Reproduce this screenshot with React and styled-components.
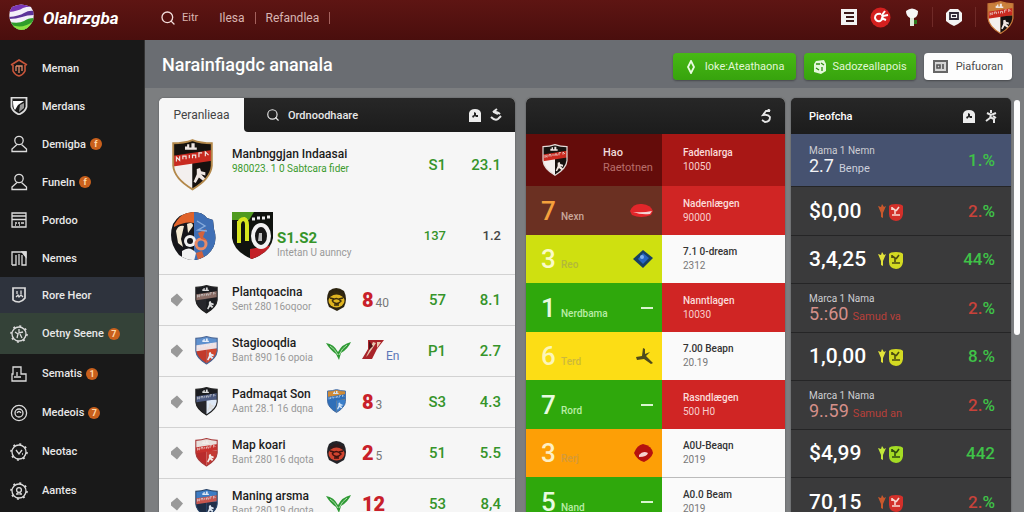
import React from "react";
import styled, { createGlobalStyle, css } from "styled-components";
import { Search } from "lucide-react";

const GlobalStyle = createGlobalStyle`
  * {
    box-sizing: border-box;
  }
  body {
    margin: 0;
    background: #7c7e80;
    font-family: Roboto, "Liberation Sans", sans-serif;
    font-size: 12px;
    color: #fff;
  }
  button, input {
    font-family: inherit;
  }
  svg {
    display: block;
    flex-shrink: 0;
  }
`;

const Page = styled.div`
  height: 100vh;
  display: flex;
  flex-direction: column;
`;

const TopBar = styled.header`
  height: 40px;
  flex-shrink: 0;
  display: flex;
  align-items: center;
  padding: 0 0 5px 9px;
  background: linear-gradient(#5e1513, #4a0e0d);
`;

const Brand = styled.a`
  width: 151px;
  display: flex;
  align-items: center;
  gap: 9px;
  color: #fff;
  font-size: 17px;
  font-weight: 700;
  font-style: italic;
  text-decoration: none;
`;

const TopNav = styled.nav`
  display: flex;
  align-items: center;
  color: #d9b5b2;
`;

const TopLink = styled.a`
  color: #d9b5b2;
  font-size: ${props => (props.$first ? 11 : 12)}px;
  line-height: 12px;
  text-decoration: none;
  padding-left: ${props => (props.$first ? 6 : 10)}px;
  padding-right: 10px;
  border-right: 1px solid ${props => (props.$first ? "transparent" : "#a5625e")};
`;

const TopTools = styled.div`
  margin-left: auto;
  display: flex;
  align-items: center;
`;

const ToolButton = styled.button`
  border: 0;
  padding: 0;
  background: none;
  width: ${props => props.$width}px;
  display: flex;
  justify-content: center;
  cursor: pointer;
`;

const ToolDivider = styled.span`
  width: 1px;
  height: 20px;
  background: #6f2a27;
`;

const Body = styled.div`
  flex: 1;
  min-height: 0;
  display: flex;
`;

const Sidebar = styled.nav`
  width: 145px;
  flex-shrink: 0;
  padding-top: 9px;
  background: #191919;
  border-right: 1px solid #333;
  overflow: hidden;
`;

const SideLink = styled.a`
  display: flex;
  align-items: center;
  height: ${props => props.$height}px;
  padding-left: 10px;
  color: #e8e8e8;
  font-size: 11px;
  font-weight: 500;
  text-decoration: none;
  background: ${props => props.$background || "transparent"};

  svg {
    margin-right: 14px;
  }
`;

const SideBadge = styled.span`
  width: 12px;
  height: 12px;
  margin-left: 4px;
  border-radius: 50%;
  background: #c9601c;
  color: #ffd9a8;
  font-size: 9px;
  line-height: 12px;
  font-weight: 700;
  text-align: center;
`;

const Content = styled.main`
  flex: 1;
  min-width: 0;
  overflow-y: auto;
  scrollbar-width: none;
`;

const TitleBar = styled.div`
  display: flex;
  align-items: center;
  gap: 8px;
  height: 48px;
  padding: 5px 12px 0 17px;
  background: #6a6d72;
`;

const Title = styled.h1`
  margin: 0 auto 4px 0;
  font-size: 18px;
  line-height: 24px;
  font-weight: 500;
`;

const ActionButton = styled.button`
  display: flex;
  align-items: center;
  gap: ${props => props.$gap || 6}px;
  height: 27px;
  padding: 0 ${props => props.$pad || 9}px;
  border: 0;
  border-radius: 4px;
  font-size: 11px;
  white-space: nowrap;
  color: ${props => (props.$plain ? "#4a4a4a" : "#e2f7d6")};
  background: ${props =>
    props.$plain ? "#fdfdfd" : "linear-gradient(#47b915, #37a30d)"};
  box-shadow: 0 1px 2px rgba(0, 0, 0, 0.35);
  cursor: pointer;
`;

const Panels = styled.div`
  display: flex;
  align-items: flex-start;
  gap: 3px;
  padding: 10px 4px 0 14px;
`;

const Columns = styled.div`
  flex: 1;
  display: grid;
  grid-template-columns: 361fr 259fr 220fr;
  gap: 6px;
`;

const ScrollThumb = styled.div`
  width: 6px;
  height: 235px;
  margin-top: 2px;
  border-radius: 3px;
  background: #fcfcfc;
`;

const Card = styled.section`
  min-width: 0;
  overflow: hidden;
  border-radius: 5px 5px 0 0;
  background: ${props => props.$background || "#f6f6f6"};
  margin-right: ${props => (props.$wide ? 5 : 0)}px;
  box-shadow: 0 0 2px rgba(0, 0, 0, 0.35);
`;

const CardHead = styled.div`
  display: flex;
  align-items: center;
  height: ${props => props.$height || 36}px;
  padding: 0 13px 0 18px;
  gap: 8px;
  background: linear-gradient(#272727, #1c1c1c);
`;

const CardTitle = styled.h2`
  margin: 0;
  font-size: 11px;
  font-weight: 500;
`;

const Spacer = styled.span`
  flex: 1;
`;

const TabRow = styled.div`
  display: flex;
`;

const Tab = styled.button`
  width: 85px;
  border: 0;
  padding: 0;
  background: #f6f6f6;
  color: #444;
  font-size: 12px;
`;

const TabTools = styled(CardHead)`
  flex: 1;
  min-width: 0;
  padding-left: 22px;
  border-bottom-left-radius: 4px;
`;

const SearchInput = styled.input`
  width: 100px;
  border: 0;
  padding: 0;
  background: none;
  color: #fff;
  font-size: 11px;
  font-weight: 500;
  outline: none;

  &::placeholder {
    color: #e8e8e8;
  }
`;

const HeadButton = styled.button`
  border: 0;
  padding: 0;
  background: none;
  color: #e6e6e6;
  cursor: pointer;
`;

const Table = styled.table`
  width: 100%;
  table-layout: fixed;
  border-collapse: collapse;

  td {
    padding: 0;
  }
`;

const TeamRow = styled.tr`
  height: ${props => props.$height || 51}px;

  ${props =>
    props.$lined &&
    css`
      border-top: 1px solid #d2d2d2;
    `}
`;

const MarkCell = styled.td`
  && {
    padding-left: 11px;
  }
`;

const Inline = styled.div`
  display: flex;
  align-items: ${props => props.$align || "center"};
  gap: ${props => props.$gap || 0}px;
`;

const TeamName = styled.div`
  font-size: 12px;
  line-height: 15px;
  font-weight: 500;
  color: #1c1c1c;
  white-space: nowrap;
`;

const TeamNote = styled.div`
  font-size: 10px;
  line-height: 14px;
  color: ${props => (props.$green ? "#3b9a2d" : "#999")};
  padding-bottom: ${props => (props.$green ? 8 : 0)}px;
  white-space: nowrap;
`;

const Odds = styled.div`
  font-size: 15px;
  line-height: 16px;
  font-weight: 700;
  color: #35942a;
`;

const Score = styled.span`
  font-size: 20px;
  line-height: 24px;
  font-weight: 900;
  color: #c8202a;
`;

const ScoreNote = styled.span`
  font-size: 12px;
  color: ${props => props.$color || "#777"};
`;

const ValueCell = styled.td`
  text-align: right;
  font-size: ${props => (props.$small ? 13 : 15)}px;
  font-weight: 500;
  color: ${props => (props.$dark ? "#444" : "#35942a")};

  &&:last-child {
    padding-right: 14px;
  }
`;

const GroupRow = styled.tr`
  height: ${props => props.$height}px;
`;

const GroupCell = styled.td`
  background: ${props => props.$background};

  && {
    padding: 0 9px 0 15px;
  }
`;

const GroupInner = styled.div`
  display: flex;
  align-items: center;
  justify-content: space-between;
`;

const GroupNumber = styled.span`
  width: 20px;
  font-size: 26px;
  line-height: 30px;
  font-weight: 500;
  color: ${props => props.$color};
`;

const GroupLabel = styled.span`
  font-size: 10px;
  line-height: 14px;
  font-weight: 500;
  color: ${props => props.$color};
`;

const GroupHead = styled.div`
  width: 50px;
  font-size: 11px;
  line-height: 15px;
  font-weight: 500;
  color: #f0dada;
  white-space: nowrap;
`;

const GroupSub = styled.div`
  font-weight: 400;
  color: #b86f6b;
`;

const Dash = styled.span`
  width: 12px;
  height: 2px;
  background: #d9f5cf;
`;

const SideCell = styled.td`
  background: ${props => props.$background};
  color: ${props => (props.$light ? "#777" : "#f7cfcd")};
  font-size: 10px;
  line-height: 14px;
  box-shadow: ${props => (props.$lined ? "inset 0 1px #bbb" : "none")};

  && {
    padding-left: 21px;
  }
  strong {
    display: block;
    font-weight: 500;
    color: ${props => (props.$light ? "#333" : "#fbdcda")};
  }
`;

const PriceRow = styled.tr`
  height: ${props => props.$height}px;
  background: ${props => (props.$selected ? "#465270" : "#3a3a3b")};
  border-bottom: 1px solid #252526;

  td:first-child {
    padding-left: 18px;
  }
  td:last-child {
    padding-right: 16px;
    text-align: right;
  }
`;

const Price = styled.span`
  width: 54px;
  font-size: 21px;
  line-height: 24px;
  font-weight: 500;
  white-space: nowrap;
`;

const SmallTitle = styled.div`
  font-size: 10px;
  line-height: 12px;
  color: #cdcdd2;
`;

const SmallPrice = styled.span`
  font-size: 18px;
  line-height: 18px;
  color: ${props => props.$color};
`;

const SmallUnit = styled.span`
  font-size: 11px;
  color: ${props => props.$color};
`;

const Percent = styled.span`
  font-size: 17px;
  font-weight: 500;
  color: ${props => (props.$down ? "#c8423a" : "#3fc248")};
`;

const SHIELD = "M2 3 Q12 3 20 0 Q28 3 38 3 V24 Q37 36 20 46 Q3 36 2 24 Z";

function Crest({ width, border, top, left, right, band, mark, id }) {
  return (
    <svg width={width} viewBox="-1 -1 42 49" aria-hidden="true">
      <clipPath id={id}>
        <path d={SHIELD} />
      </clipPath>
      <g clipPath={`url(#${id})`}>
        <rect width="40" height="48" fill={top} />
        <rect y="20" width="20" height="28" fill={left} />
        <rect x="20" y="20" width="20" height="28" fill={right} />
        <path d="M0 15 L40 9 V19 L0 25 Z" fill={band} />
        <path
          d="M5 20 v-4 l3 3 v-4 M11 18 v-3 h3 v3 M17 17 v-3 M20 17 v-3 h3 v3 M26 16 v-4 h3 M32 15 v-4 l3 3"
          stroke={mark}
          strokeWidth="1.1"
          fill="none"
        />
        <path d="M13 9 v-3 h2 v-2 h2 v3 h2 v-4 h3 v4 h2 v2 z" fill={mark} />
        <path
          d="M24 27 l3 -1 1 3 4 1 v3 l-4 -1 5 5 -2 2 -5 -4 -3 5 -2 -1 3 -7 z"
          fill={mark}
        />
      </g>
      <path d={SHIELD} fill="none" stroke={border} strokeWidth="1.8" />
    </svg>
  );
}

function Logo() {
  return (
    <svg width="25" height="27" viewBox="0 0 25 27" aria-hidden="true">
      <clipPath id="logo">
        <path d="M3 3 Q12 -2 22 3 Q26 8 24 17 Q19 26 12 26 Q4 25 1 16 Q-1 8 3 3Z" />
      </clipPath>
      <g clipPath="url(#logo)">
        <rect width="25" height="27" fill="#f3eef8" />
        <path d="M0 8 Q9 7 14 4 Q19 2 25 3 V0 H0Z" fill="#7a35b5" />
        <path d="M0 13 Q10 12 15 9 Q20 6 25 7 V11 Q18 11 13 13 Q7 15 0 15Z" fill="#5d3399" />
        <path d="M0 18 Q10 20 15 17 Q19 14 25 14 V27 H0Z" fill="#2f9d2b" />
        <path d="M2 21 Q14 25 23 18 L18 27 H6Z" fill="#8be044" />
      </g>
    </svg>
  );
}

function Line({ children, color = "#dcdcdc" }) {
  return (
    <svg
      width="18"
      height="18"
      viewBox="0 0 18 18"
      fill="none"
      stroke={color}
      strokeWidth="1.3"
      aria-hidden="true"
    >
      {children}
    </svg>
  );
}

const gear = (
  <>
    <circle cx="9" cy="9" r="7" />
    <circle cx="9" cy="9" r="8" strokeWidth="1.6" strokeDasharray="2 4.28" />
  </>
);

const user = (
  <>
    <circle cx="9" cy="5.5" r="4.2" />
    <path d="M7 9.5 L2 14 V16.5 H16.5 V14 L11.5 9.5" />
  </>
);

const SIDE_ICONS = {
  home: (
    <Line color="#c8553a">
      <path d="M1 6 L9 1 L17 6 M3 6 V12 Q5 16 9 17 Q13 16 15 12 V6" strokeWidth="1.6" />
      <path d="M6 7 H12 V12 M9 7 V14 M6 7 V12" stroke="#e08a6a" />
    </Line>
  ),
  shield: (
    <Line>
      <path d="M1.5 0.5 H16.5 V10 Q15 15 9 17.5 Q3 15 1.5 10 Z" strokeWidth="1.8" />
      <path d="M3 4 H14 L8 8 L5 13 Q3 11 3 4 Z" fill="#fff" stroke="none" />
      <path d="M10 8 L14 6 V11 L9 15 Z" fill="#999" stroke="none" />
    </Line>
  ),
  user: <Line>{user}</Line>,
  table: (
    <Line>
      <path d="M2 2 H16 V16 H2 Z M2 5 H16 M2 8.5 H16" />
      <path d="M5 12 h2 M8 12 h2 M11 12 h3 M5 14 h1 M9 14 h1" />
    </Line>
  ),
  columns: (
    <Line>
      <path d="M2 16 V3 H16 V16 H12 V6 M2 16 H6 V6 M9 5 V16" />
      <path d="M12 3 h4 v5 z" fill="#dcdcdc" />
    </Line>
  ),
  badge: (
    <Line>
      <path d="M3 2 H15 V12 Q13 15 9 16 Q5 16 3 14 Z" strokeWidth="1.7" />
      <path d="M6 11 L8 9 L9 11 L11 9 L13 11 M7 5 V8 M11 4.5 V8" />
    </Line>
  ),
  gearA: (
    <Line>
      {gear}
      <path d="M5 7 L8 9 L7 13 M9 4 V8 L13 7 M10 9 L12 13" />
    </Line>
  ),
  blocks: (
    <Line>
      <path d="M3 2 H11 V9 H16 V16 H2 V9 H3 Z M7 7 V11 M4 12 H11" />
    </Line>
  ),
  ring: (
    <Line>
      <circle cx="9" cy="9" r="7.6" />
      <circle cx="9" cy="9" r="4" />
      <path d="M7 9 Q9 6 11 9" />
    </Line>
  ),
  gearB: (
    <Line>
      {gear}
      <path d="M6 7 L9 11 L12 7 M12 11 h1" />
    </Line>
  ),
  gearC: (
    <Line>
      {gear}
      <circle cx="9" cy="8" r="2.4" />
      <path d="M6 12 H8 V10 M10 10 V12 H12" />
    </Line>
  )
};

function HouseIcon() {
  return (
    <svg width="14" height="15" viewBox="0 0 14 15" aria-hidden="true">
      <path d="M1 5 Q2 1 7 1 Q12 1 13 5 V14 H1 Z" fill="#ececec" />
      <path d="M6 4 l2 1 v2 h2 v2 h-2 l-1 -1 -2 2 -1 -2 2 -1z" fill="#222" />
    </svg>
  );
}

function SwapIcon() {
  return (
    <svg width="12" height="14" viewBox="0 0 12 14" fill="none" stroke="#e6e6e6" strokeWidth="2" aria-hidden="true">
      <path d="M7 1 L3 4 Q7 3 10 6 M1 9 Q5 13 8 11 L11 8 M4 4 L8 6" />
    </svg>
  );
}

function HookIcon() {
  return (
    <svg width="12" height="15" viewBox="0 0 12 15" fill="none" stroke="#e6e6e6" strokeWidth="1.8" aria-hidden="true">
      <path d="M10 2 H6 L3 6 Q8 5 10 8 Q10 13 5 13 L2 11 M8 0 L10 2" />
    </svg>
  );
}

function RunnerIcon() {
  return (
    <svg width="14" height="15" viewBox="0 0 14 15" fill="none" stroke="#e6e6e6" strokeWidth="2" aria-hidden="true">
      <path d="M7 1 V4 M3 4 L7 6 L12 4 M7 6 L6 9 L2 12 M6 8 L10 10 V14 M9 7 L12 9" />
    </svg>
  );
}

function Diamond() {
  return (
    <svg width="14" height="14" viewBox="0 0 14 14" aria-hidden="true">
      <path d="M7 0.5 L13 6.5 L7 13.5 L1 8.5 V5.5 Z" fill="#999" />
    </svg>
  );
}

function Leaf() {
  return (
    <svg width="25" height="20" viewBox="0 0 25 20" aria-hidden="true">
      <path d="M0 2 Q8 3 12 11 Q16 3 25 1 Q22 8 15 12 L13 19 L10 13 Q4 9 0 2Z" fill="#2f9a35" />
      <path d="M4 5 Q9 8 12 14 M21 4 Q16 7 13 14" stroke="#c9ecc4" strokeWidth="0.8" fill="none" />
    </svg>
  );
}

function Slash() {
  return (
    <svg width="22" height="21" viewBox="0 0 22 21" aria-hidden="true">
      <path d="M6 1 H22 L15 10 L10 20 H0 L6 10 Z" fill="#a9242a" />
      <path d="M11 3 L14 4 L6 16 L4 18 Z M15 3 h4 l-4 6z" fill="#e8c9b0" />
      <path d="M7 2 l4 5 -4 4z" fill="#531317" />
    </svg>
  );
}

function RoundCrest() {
  return (
    <svg width="46" height="50" viewBox="0 0 46 50" aria-hidden="true">
      <clipPath id="round">
        <path d="M23 1 Q33 1 37 7 L43 9 L44 18 Q49 34 37 44 Q23 54 9 44 Q-3 30 3 13 Q9 2 23 1Z" />
      </clipPath>
      <g clipPath="url(#round)">
        <rect width="46" height="50" fill="#16161a" />
        <rect x="24" width="22" height="50" fill="#3f6fb5" />
        <path d="M4 14 Q12 0 24 0 V12 Q15 10 4 16Z" fill="#e0622a" />
        <path d="M6 20 Q8 14 14 15 L11 28 L13 36 L8 32 Z M17 13 Q23 10 23 15 L18 22 Z" fill="#f4ead2" />
        <circle cx="20" cy="30" r="6" fill="#f2f2f2" />
        <circle cx="20" cy="30" r="3" fill="#16161a" />
        <path d="M12 40 Q20 34 26 42 L24 50 H12Z" fill="#f2f2f2" />
        <circle cx="31" cy="33" r="5" fill="none" stroke="#e98a66" strokeWidth="3" />
        <path d="M28 22 L36 18 L33 26 L38 30 L31 28Z M26 42 l6 -2 2 6 -6 3z" fill="#d2623c" />
        <path d="M27 10 l8 5 -7 4 9 1" stroke="#86abdc" strokeWidth="1.4" fill="none" />
      </g>
    </svg>
  );
}

function NoCrest() {
  return (
    <svg width="41" height="49" viewBox="0 0 41 49" aria-hidden="true">
      <clipPath id="nocrest">
        <path d="M0 1 H41 V27 Q39 41 20 48 Q2 41 0 27 Z" />
      </clipPath>
      <g clipPath="url(#nocrest)">
        <rect width="41" height="49" fill="#10130f" />
        <path d="M0 1 H22 L17 9 H0Z" fill="#4f9a1f" />
        <path d="M18 38 L41 34 L30 49 H18Z" fill="#c32127" />
        <path d="M7 32 V10 M7 13 Q8 8 12 8 Q15 9 15 14 V30" stroke="#d6e51e" strokeWidth="4" fill="none" />
        <ellipse cx="29" cy="25" rx="8" ry="11" fill="#171717" stroke="#f2f2f2" strokeWidth="4" />
        <path d="M27 22 h3 v8 h-4 z" fill="#bbb" />
        <path d="M20 8 h3 M25 7 h3 M30 7 h3 M35 6 h3" stroke="#eee" strokeWidth="3" />
      </g>
    </svg>
  );
}

function RoundBadge({ outer, inner, mark }) {
  return (
    <svg width="21" height="25" viewBox="0 0 21 25" aria-hidden="true">
      <path d="M3 4 Q10 -2 18 4 Q22 12 18 20 L11 24 L3 20 Q-1 12 3 4Z" fill={outer} />
      <path d="M4 6 h3 l1 -3 2 2 2 -2 2 3 h3 v3 H4z" fill={mark} opacity="0.5" />
      <ellipse cx="10.5" cy="14" rx="8" ry="6.5" fill={inner} />
      <path d="M6 14 q4 -5 9 0 q-4 5 -9 0 M8 18 h5 M4 11 l4 1 M17 11 l-4 1" stroke={mark} strokeWidth="1.4" fill="none" />
    </svg>
  );
}

function Chip({ color, arrow, ink }) {
  return (
    <svg width="27" height="22" viewBox="0 -2 27 22" aria-hidden="true">
      <path d="M1 4 L4 5 L5 2 L7 5 L9 4 L6 11 V16 L4 15 V11 Z" fill={arrow} />
      <path d="M12 4 Q13 2 19 2 Q25 2 26 4 V12 Q25 19 19 19 Q12 18 12 12Z" fill={color} />
      <path d="M15 6 L18 8 V12 M22 5 L19 9 M15 13 H23 M15 5 V8" stroke={ink} strokeWidth="1.6" fill="none" />
    </svg>
  );
}

const SIDE_ITEMS = [
  { icon: "home", label: "Meman", height: 38 },
  { icon: "shield", label: "Merdans", height: 38 },
  { icon: "user", label: "Demigba", height: 38, badge: "f" },
  { icon: "user", label: "Funeln", height: 38, badge: "f" },
  { icon: "table", label: "Pordoo", height: 38 },
  { icon: "columns", label: "Nemes", height: 38 },
  { icon: "badge", label: "Rore Heor", height: 36, background: "#2e333d" },
  { icon: "gearA", label: "Oetny Seene", height: 41, badge: "7", background: "#344238" },
  { icon: "blocks", label: "Sematis", height: 39, badge: "1" },
  { icon: "ring", label: "Medeois", height: 39, badge: "7" },
  { icon: "gearB", label: "Neotac", height: 39 },
  { icon: "gearC", label: "Aantes", height: 39 }
];

const DARK = { border: "#222", top: "#1b1c20", left: "#26262b", right: "#1b1c20", band: "#8a6d66", mark: "#ddd" };
const RED = { border: "#a73a3a", top: "#e9e1dd", left: "#b92c2c", right: "#c53a34", band: "#c8322e", mark: "#f3ece8" };
const BLUE = { border: "#4a6695", top: "#5f91cf", left: "#c23a2c", right: "#d0472f", band: "#f0dfe0", mark: "#e7eefa" };
const NAVY = { border: "#284468", top: "#3d7cc4", left: "#1d2c45", right: "#22304a", band: "#c6564e", mark: "#dfe8f3" };
const CLUB = { border: "#b3884a", top: "#17130f", left: "#f3efee", right: "#16110f", band: "#c92a20", mark: "#efe6e2" };

const TEAMS = [
  {
    name: "Plantqoacina",
    note: "Sent 280 16oqoor",
    crest: DARK,
    badge: <RoundBadge outer="#2c2410" inner="#e0b520" mark="#3a2c0b" />,
    score: "8",
    scoreNote: "40",
    a: "57",
    b: "8.1"
  },
  {
    name: "Stagiooqdia",
    note: "Bant 890 16 opoia",
    crest: BLUE,
    badge: <Leaf />,
    form: <Slash />,
    scoreNote: "En",
    noteColor: "#5b76b8",
    a: "P1",
    b: "2.7"
  },
  {
    name: "Padmaqat Son",
    note: "Aant 28.1 16 dqna",
    crest: { ...DARK, band: "#4d5a80", right: "#dfe9f7" },
    badge: (
      <Crest id="badge" width={21} border="#3c6aa8" top="#d08a35" left="#2f6fb8" right="#3b7fca" band="#2f6fb8" mark="#cfe2f7" />
    ),
    score: "8",
    scoreNote: "3",
    a: "S3",
    b: "4.3"
  },
  {
    name: "Map koari",
    note: "Bant 280 16 dqota",
    crest: RED,
    badge: <RoundBadge outer="#232328" inner="#d2442f" mark="#40120f" />,
    score: "2",
    scoreNote: "5",
    a: "51",
    b: "5.5"
  },
  {
    name: "Maning arsma",
    note: "Bant 280 19 dqota",
    crest: NAVY,
    badge: <Leaf />,
    score: "12",
    a: "53",
    b: "8,4"
  }
];

const GREEN_GROUP = { color: "#e8fbe0", labelColor: "#b9eda6", background: "#2fa80c", icon: "dash" };

const GROUPS = [
  { n: "7", color: "#f5a03c", label: "Nexn", labelColor: "#c9a79b", background: "#6b3022", icon: "cap", side: "Nadenlægen", sub: "90000" },
  { n: "3", color: "#fbfbc8", label: "Reo", labelColor: "#b3b83a", background: "#cfe010", icon: "gem", side: "7.1 0-dream", sub: "2312", light: true },
  { ...GREEN_GROUP, n: "1", label: "Nerdbama", side: "Nanntlagen", sub: "10030" },
  { n: "6", color: "#fdf6b8", label: "Terd", labelColor: "#cdb93c", background: "#fcdd15", icon: "bird", side: "7.00 Beapn", sub: "20.19", light: true },
  { ...GREEN_GROUP, n: "7", label: "Rord", side: "Rasndlægen", sub: "500 H0" },
  { n: "3", color: "#fdf0c4", label: "Rerj", labelColor: "#d49a3a", background: "#fd9f06", icon: "seal", side: "A0U-Beaqn", sub: "2019", light: true },
  { ...GREEN_GROUP, n: "5", label: "Nand", side: "A0.0 Beam", sub: "2019", light: true, lined: true }
];

const GROUP_ICONS = {
  dash: <Dash />,
  cap: (
    <svg width="23" height="15" viewBox="0 0 23 15" aria-hidden="true">
      <path d="M0 8 Q3 0 12 1 Q21 2 23 8 L21 12 Q11 16 2 12Z" fill="#e2262a" />
      <path d="M3 9 Q13 10 22 8 L20 11 Q11 12 3 9Z" fill="#f3d6d4" />
    </svg>
  ),
  gem: (
    <svg width="20" height="18" viewBox="0 0 20 18" aria-hidden="true">
      <path d="M10 0 L20 8 L10 18 L0 9Z" fill="#173f63" />
      <path d="M10 3 L16 8 L10 14 L5 9Z" fill="#2765c4" />
      <circle cx="9" cy="7" r="2" fill="#7fb0ee" />
    </svg>
  ),
  bird: (
    <svg width="17" height="17" viewBox="0 0 17 17" aria-hidden="true">
      <path d="M7 0 L9 1 L9 6 L14 4 L10 8 L17 15 L15 16 L8 11 L1 12 L0 9 L6 8Z" fill="#4e4a1c" />
    </svg>
  ),
  seal: (
    <svg width="19" height="19" viewBox="0 0 19 19" aria-hidden="true">
      <path d="M9 0 Q18 2 19 9 Q17 15 10 18 Q3 16 0 9 Q3 1 9 0Z" fill="#b5120f" />
      <path d="M5 11 Q9 6 14 9 Q13 13 5 13Z" fill="#f6d4cf" />
    </svg>
  )
};

const PRICES = [
  { price: "$0,00", chip: "red", down: true, rate: "2." },
  { price: "3,4,25", chip: "yellow", rate: "44" },
  { small: "5.:60", unit: "Samud va", down: true, rate: "2." },
  { price: "1,0,00", chip: "yellow", rate: "8." },
  { small: "9..59", unit: "Samud an", down: true, rate: "2." },
  { price: "$4,99", chip: "lime", rate: "442", plain: true },
  { price: "70,15", chip: "red", down: true, rate: "2." }
];

const CHIPS = {
  red: <Chip color="#d3302a" arrow="#c8582c" ink="#f7d9d2" />,
  yellow: <Chip color="#d3da22" arrow="#e3e33a" ink="#4a4a10" />,
  lime: <Chip color="#a4dc24" arrow="#c2e83a" ink="#2f4a10" />
};

// coloured rows are one pixel taller than the light ones
const rowHeight = i => (i % 2 === 0 ? 49 : 48);

function Header() {
  return (
    <TopBar>
      <Brand href="#">
        <Logo />
        Olahrzgba
      </Brand>
      <TopNav>
        <Search size={16} color="#f2dcda" />
        <TopLink href="#" $first>
          Eitr
        </TopLink>
        <TopLink href="#">Ilesa</TopLink>
        <TopLink href="#">Refandlea</TopLink>
      </TopNav>
      <TopTools>
        <ToolButton aria-label="News" $width={38}>
          <svg width="16" height="16" viewBox="0 0 16 16">
            <rect width="16" height="16" fill="#f4f4f4" />
            <path d="M3 4 H13 M5 8 H13 M5 12 H13" stroke="#3a1a1a" strokeWidth="2" />
          </svg>
        </ToolButton>
        <ToolButton aria-label="Live" $width={24}>
          <svg width="21" height="21" viewBox="0 0 21 21">
            <circle cx="10.5" cy="10.5" r="10" fill="#d4201f" />
            <path d="M11 7 Q5 6 5 11 Q6 15 10 14 Q14 12 12 8 L15 4 M13 9 L18 8 M11 11 L16 13" stroke="#fff" strokeWidth="2" fill="none" />
          </svg>
        </ToolButton>
        <ToolButton aria-label="Trophies" $width={40}>
          <svg width="14" height="18" viewBox="0 0 14 18">
            <path d="M5 9 H9 V18 H5Z" fill="#dfe9d8" />
            <path d="M9 12 h3 v4 h-3z" fill="#2d7a1c" />
            <path d="M1 3 Q7 -2 13 3 Q13 9 9 10 H5 Q1 8 1 3Z" fill="#f7f7f7" />
          </svg>
        </ToolButton>
        <ToolDivider />
        <ToolButton aria-label="Account" $width={42}>
          <svg width="18" height="18" viewBox="0 0 18 18">
            <path d="M5 1 H13 L17 5 V13 L13 16 L9 18 L5 16 L1 13 V5Z" fill="#f4f4f4" />
            <path d="M5 5 H13 V11 H5Z M7 8 H11" stroke="#2f2a38" strokeWidth="1.8" fill="none" />
          </svg>
        </ToolButton>
        <ToolDivider />
        <ToolButton aria-label="Club" $width={48}>
          <Crest id="top" width={29} {...CLUB} border="#c97a3a" top="#c9803c" />
        </ToolButton>
      </TopTools>
    </TopBar>
  );
}

function TeamCard() {
  return (
    <Card $wide>
      <TabRow>
        <Tab>Peranlieaa</Tab>
        <TabTools $height={34}>
          <Search size={14} color="#e8e8e8" />
          <SearchInput aria-label="Search teams" placeholder="Ordnoodhaare" />
          <Spacer />
          <HeadButton aria-label="Home">
            <HouseIcon />
          </HeadButton>
          <HeadButton aria-label="Refresh">
            <SwapIcon />
          </HeadButton>
        </TabTools>
      </TabRow>
      <Table>
        <colgroup>
          <col width="35" />
          <col width="38" />
          <col />
          <col width="36" />
          <col width="40" />
          <col width="44" />
          <col width="69" />
        </colgroup>
        <tbody>
          <TeamRow $height={66}>
            <MarkCell colSpan="2">
              <Crest id="main" width={45} {...CLUB} />
            </MarkCell>
            <td colSpan="3">
              <TeamName>Manbnggjan Indaasai</TeamName>
              <TeamNote $green>980023. 1 0 Sabtcara fider</TeamNote>
            </td>
            <ValueCell>S1</ValueCell>
            <ValueCell>23.1</ValueCell>
          </TeamRow>
          <TeamRow $height={76}>
            <MarkCell colSpan="2">
              <RoundCrest />
            </MarkCell>
            <td colSpan="3">
              <Inline $gap={4} $align="flex-end">
                <NoCrest />
                <div>
                  <Odds>S1.S2</Odds>
                  <TeamNote>Intetan U aunncy</TeamNote>
                </div>
              </Inline>
            </td>
            <ValueCell $small>137</ValueCell>
            <ValueCell $small $dark>
              1.2
            </ValueCell>
          </TeamRow>
          {TEAMS.map((team, i) => (
            <TeamRow key={team.name} $lined>
              <MarkCell>
                <Diamond />
              </MarkCell>
              <td>
                <Crest id={`team${i}`} width={25} {...team.crest} />
              </td>
              <td>
                <TeamName>{team.name}</TeamName>
                <TeamNote>{team.note}</TeamNote>
              </td>
              <td>{team.badge}</td>
              <td>
                <Inline $gap={2} $align="baseline">
                  {team.form || <Score>{team.score}</Score>}
                  <ScoreNote $color={team.noteColor}>{team.scoreNote}</ScoreNote>
                </Inline>
              </td>
              <ValueCell>{team.a}</ValueCell>
              <ValueCell>{team.b}</ValueCell>
            </TeamRow>
          ))}
        </tbody>
      </Table>
    </Card>
  );
}

function GroupCard() {
  return (
    <Card>
      <CardHead>
        <Spacer />
        <HeadButton aria-label="Reset">
          <HookIcon />
        </HeadButton>
      </CardHead>
      <Table>
        <colgroup>
          <col width="52.5%" />
          <col />
        </colgroup>
        <tbody>
          <GroupRow $height={52}>
            <GroupCell $background="#640c0a">
              <GroupInner>
                <Crest id="group" width={28} {...CLUB} border="#e5dcd8" />
                <GroupHead>
                  Hao
                  <GroupSub>Raetotnen</GroupSub>
                </GroupHead>
              </GroupInner>
            </GroupCell>
            <SideCell $background="#a81715">
              <strong>Fadenlarga</strong>
              10050
            </SideCell>
          </GroupRow>
          {GROUPS.map((group, i) => (
            <GroupRow key={i} $height={rowHeight(i)}>
              <GroupCell $background={group.background}>
                <GroupInner>
                  <Inline $align="baseline">
                    <GroupNumber $color={group.color}>{group.n}</GroupNumber>
                    <GroupLabel $color={group.labelColor}>{group.label}</GroupLabel>
                  </Inline>
                  {GROUP_ICONS[group.icon]}
                </GroupInner>
              </GroupCell>
              <SideCell
                $background={group.light ? "#fafafa" : "#d02524"}
                $light={group.light}
                $lined={group.lined}
              >
                <strong>{group.side}</strong>
                {group.sub}
              </SideCell>
            </GroupRow>
          ))}
        </tbody>
      </Table>
    </Card>
  );
}

function PriceCard() {
  return (
    <Card $background="#3a3a3b">
      <CardHead>
        <CardTitle>Pieofcha</CardTitle>
        <Spacer />
        <HeadButton aria-label="Home">
          <HouseIcon />
        </HeadButton>
        <HeadButton aria-label="Players">
          <RunnerIcon />
        </HeadButton>
      </CardHead>
      <Table>
        <colgroup>
          <col />
          <col width="70" />
        </colgroup>
        <tbody>
          <PriceRow $height={52} $selected>
            <td>
              <SmallTitle>Mama 1 Nemn</SmallTitle>
              <Inline $align="baseline" $gap={5}>
                <SmallPrice $color="#f2f2f5">2.7</SmallPrice>
                <SmallUnit $color="#ccd0dc">Benpe</SmallUnit>
              </Inline>
            </td>
            <td>
              <Percent>1.%</Percent>
            </td>
          </PriceRow>
          {PRICES.map((row, i) => (
            <PriceRow key={i} $height={rowHeight(i)}>
              <td>
                {row.price ? (
                  <Inline $gap={14}>
                    <Price>{row.price}</Price>
                    {CHIPS[row.chip]}
                  </Inline>
                ) : (
                  <>
                    <SmallTitle>Marca 1 Nama</SmallTitle>
                    <Inline $align="baseline" $gap={4}>
                      <SmallPrice $color="#d5908a">{row.small}</SmallPrice>
                      <SmallUnit $color="#b8403a">{row.unit}</SmallUnit>
                    </Inline>
                  </>
                )}
              </td>
              <td>
                <Percent $down={row.down}>{row.rate}</Percent>
                {!row.plain && <Percent>%</Percent>}
              </td>
            </PriceRow>
          ))}
        </tbody>
      </Table>
    </Card>
  );
}

export default function App() {
  return (
    <Page>
      <GlobalStyle />
      <Header />
      <Body>
        <Sidebar>
          {SIDE_ITEMS.map(item => (
            <SideLink key={item.label} href="#" $height={item.height} $background={item.background}>
              {SIDE_ICONS[item.icon]}
              {item.label}
              {item.badge && <SideBadge>{item.badge}</SideBadge>}
            </SideLink>
          ))}
        </Sidebar>
        <Content>
          <TitleBar>
            <Title>Narainfiagdc ananala</Title>
            <ActionButton $gap={8} $pad={12}>
              <svg width="12" height="14" viewBox="0 0 12 14" fill="none" stroke="#e8fbe0" strokeWidth="1.8">
                <path d="M6 1 L9 7 L6 13 L3 7Z" />
              </svg>
              Ioke:Ateathaona
            </ActionButton>
            <ActionButton>
              <svg width="13" height="14" viewBox="0 0 13 14">
                <path d="M3 1 L11 0 L13 4 V11 L8 14 L1 12 V4Z" fill="#e4f7da" />
                <path d="M3 4 H7 M8 3 L11 5 M3 8 L6 10 M9 7 V11" stroke="#2f8f10" strokeWidth="1.3" fill="none" />
              </svg>
              Sadozeallapois
            </ActionButton>
            <ActionButton $plain $gap={8}>
              <svg width="15" height="13" viewBox="0 0 15 13">
                <rect x="1" y="1" width="13" height="11" fill="#d5d5d5" stroke="#666" strokeWidth="2" />
                <path d="M4 5 H7 V8 H4Z M10 4 V9" stroke="#555" strokeWidth="1.6" fill="none" />
              </svg>
              Piafuoran
            </ActionButton>
          </TitleBar>
          <Panels>
            <Columns>
              <TeamCard />
              <GroupCard />
              <PriceCard />
            </Columns>
            <ScrollThumb />
          </Panels>
        </Content>
      </Body>
    </Page>
  );
}
